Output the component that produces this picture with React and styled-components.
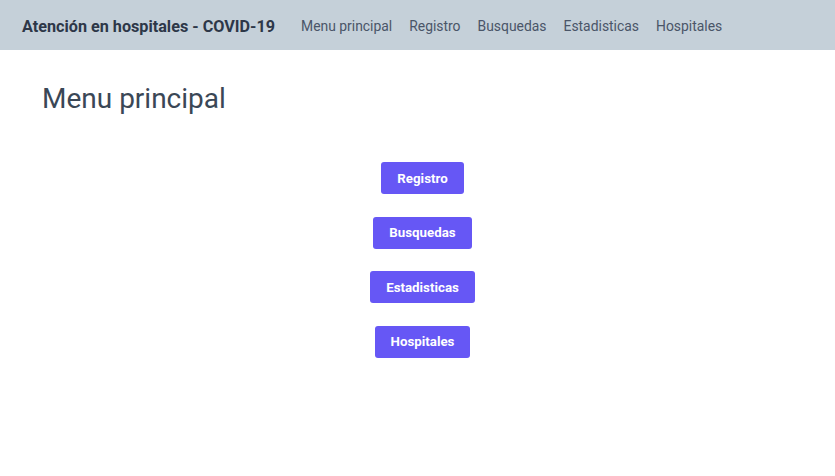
import styled, { createGlobalStyle } from "styled-components";

const GlobalStyle = createGlobalStyle`
  body {
    margin: 0;
    background: #ffffff;
    font-family: Roboto, "Noto Sans", sans-serif;
  }
`;

const NAV_LINKS = ["Menu principal", "Registro", "Busquedas", "Estadisticas", "Hospitales"];
const MENU_BUTTONS = ["Registro", "Busquedas", "Estadisticas", "Hospitales"];

const App = () => {
  return (
    <>
      <GlobalStyle />
      <St.Header>
        <St.Brand>Atención en hospitales - COVID-19</St.Brand>
        <St.Nav>
          {NAV_LINKS.map((link) => (
            <St.NavLink key={link}>{link}</St.NavLink>
          ))}
        </St.Nav>
      </St.Header>

      <St.Main>
        <St.Title>Menu principal</St.Title>
        <St.ButtonList>
          {MENU_BUTTONS.map((label) => (
            <St.MenuBtn key={label} type="button">
              {label}
            </St.MenuBtn>
          ))}
        </St.ButtonList>
      </St.Main>
    </>
  );
};

export default App;

const St = {
  Header: styled.header`
    display: flex;
    align-items: center;

    height: 50px;
    padding: 2px 22px 0;
    box-sizing: border-box;
    gap: 26px;

    background-color: #c5d0d9;
  `,

  Brand: styled.span`
    font-size: 16.2px;
    font-weight: 700;
    color: #2d3748;
  `,

  Nav: styled.nav`
    display: flex;
    align-items: center;
    gap: 17px;
  `,

  NavLink: styled.a`
    font-size: 13.9px;
    font-weight: 400;
    color: #4a5568;
    cursor: pointer;
  `,

  Main: styled.main`
    padding: 32px 42px;
  `,

  Title: styled.h1`
    margin: 0;

    font-size: 28px;
    font-weight: 400;
    color: #3a4756;
  `,

  ButtonList: styled.div`
    display: flex;
    flex-direction: column;
    align-items: center;

    margin-top: 47px;
    padding-left: 10px;
    gap: 22.5px;
  `,

  MenuBtn: styled.button`
    height: 32px;
    padding: 0 16px;

    font-family: inherit;
    font-size: 13.3px;
    font-weight: 700;
    color: #ffffff;

    background-color: #6657f5;
    border: none;
    border-radius: 3px;
  `,
};
